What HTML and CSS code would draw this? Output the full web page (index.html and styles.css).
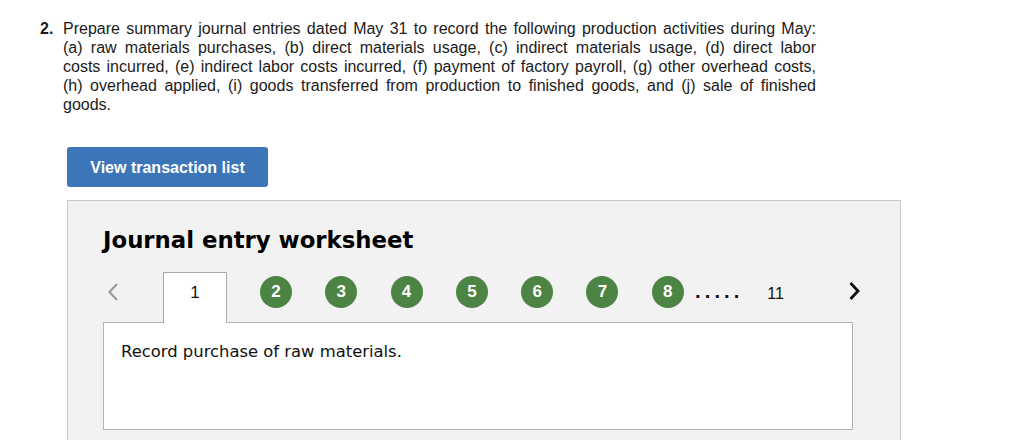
FILE: index.html
```html
<!DOCTYPE html>
<html lang="en">

<head>
    <meta charset="UTF-8" />
    <title>Journal entry worksheet</title>
    <link rel="stylesheet" href="styles.css">
</head>

<body>
    <div class="question">
        <span class="question-num">2.</span>
        <div class="question-text">
            <span class="line">Prepare summary journal entries dated May 31 to record the following production activities during May:</span>
            <span class="line">(a) raw materials purchases, (b) direct materials usage, (c) indirect materials usage, (d) direct labor</span>
            <span class="line">costs incurred, (e) indirect labor costs incurred, (f) payment of factory payroll, (g) other overhead costs,</span>
            <span class="line">(h) overhead applied, (i) goods transferred from production to finished goods, and (j) sale of finished</span>
            <span class="line last">goods.</span>
        </div>
    </div>

    <button type="button" class="btn-list">View transaction list</button>

    <div class="worksheet">
        <h2>Journal entry worksheet</h2>

        <div class="steps">
            <svg class="prev" width="10" height="18" viewBox="0 0 10 18">
                <polyline points="9,1 1.5,9 9,17" fill="none" stroke="#9a9a9a" stroke-width="2.2" />
            </svg>
            <div class="tab">1</div>
            <span class="step">2</span>
            <span class="step">3</span>
            <span class="step">4</span>
            <span class="step">5</span>
            <span class="step">6</span>
            <span class="step">7</span>
            <span class="step">8</span>
            <span class="more">.....</span>
            <span class="last-step">11</span>
            <svg class="next" width="11" height="18" viewBox="0 0 11 18">
                <polyline points="1.5,1 9,9 1.5,17" fill="none" stroke="#111" stroke-width="2.8" />
            </svg>
        </div>

        <div class="entry">
            <p>Record purchase of raw materials.</p>
        </div>
    </div>
</body>

</html>
```

FILE: styles.css
```css
body {
    margin: 0;
    font-family: "Liberation Sans", Arial, sans-serif;
    color: #1b1b1b;
    background-color: #fff;
}

.question {
    display: flex;
    margin: 19px 0 0 40px;
    width: 776px;
    font-size: 16px;
    line-height: 19px;
}

.question-num {
    width: 23px;
    flex-shrink: 0;
    font-weight: bold;
}

.question-text {
    flex: 1;
}

.question-text .line {
    display: block;
    text-align: justify;
    text-align-last: justify;
}

.question-text .line.last {
    text-align-last: left;
}

.btn-list {
    display: block;
    margin: 33px 0 0 67px;
    padding: 2px 0 0;
    width: 201px;
    height: 40px;
    border: none;
    border-radius: 3px;
    background-color: #3d75b9;
    color: #fff;
    font-family: "Liberation Sans", Arial, sans-serif;
    font-size: 16px;
    font-weight: bold;
    cursor: pointer;
}

.worksheet {
    box-sizing: border-box;
    margin: 13px 0 0 67px;
    width: 834px;
    min-height: 300px;
    padding: 25px 47px 0 35px;
    background-color: #f2f2f2;
    border: 1px solid #c8c8c8;
}

.worksheet h2 {
    margin: 0;
    font-family: "DejaVu Sans", Verdana, sans-serif;
    font-size: 22.8px;
    line-height: 28px;
    font-weight: bold;
    color: #000;
}

.steps {
    display: flex;
    align-items: flex-start;
    height: 50px;
    margin: 18px -7px 0 0;
}

.prev {
    margin: 11px 45px 0 5px;
}

.tab {
    position: relative;
    box-sizing: border-box;
    width: 64px;
    height: 51px;
    margin-right: 33px;
    padding-top: 10px;
    background-color: #fff;
    border: 1px solid #a9a9a9;
    border-bottom: none;
    text-align: center;
    font-size: 17px;
    line-height: 20px;
    color: #111;
}

.step {
    width: 32px;
    height: 32px;
    margin: 4px 33.3px 0 0;
    border-radius: 50%;
    background-color: #4c8443;
    color: #fff;
    text-align: center;
    font-size: 17px;
    font-weight: bold;
    line-height: 32px;
}

.step:nth-of-type(7) {
    margin-right: 11px;
}

.more {
    margin-top: 11px;
    font-family: "DejaVu Sans", Verdana, sans-serif;
    font-size: 16px;
    font-weight: bold;
    line-height: 20px;
    letter-spacing: 3.6px;
    color: #111;
}

.last-step {
    margin: 12px 0 0 24px;
    font-size: 16px;
    line-height: 20px;
    color: #111;
}

.next {
    margin: 10px 0 0 auto;
}

.entry {
    box-sizing: border-box;
    height: 108px;
    padding: 20px 17px;
    background-color: #fff;
    border: 1px solid #b5b5b5;
}

.entry p {
    margin: 0;
    font-family: "DejaVu Sans", Verdana, sans-serif;
    font-size: 16.4px;
    line-height: 18px;
    color: #111;
}
```
